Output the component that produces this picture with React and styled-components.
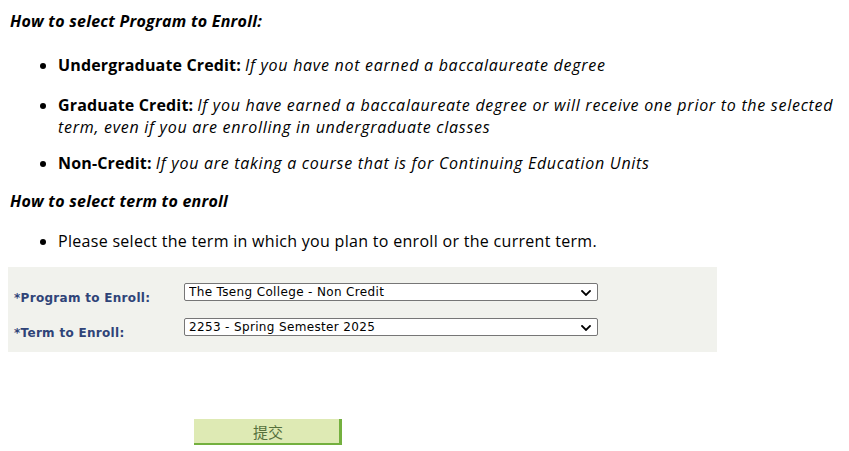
import React from "react";
import styled, { createGlobalStyle } from "styled-components";

const Global = createGlobalStyle`
  html, body { margin: 0; padding: 0; background: #ffffff; }
  body { font-family: "Open Sans", "Noto Sans", sans-serif; color: #000; }
`;

const Page = styled.div`
  padding: 0 8px 8px 8px;
  width: 833px;
`;

const Heading = styled.div`
  font-size: 16px;
  font-weight: 700;
  font-style: italic;
  line-height: 22px;
  letter-spacing: 0.25px;
  margin: ${(p) => p.$mt}px 0 0 2px;
`;

const List = styled.ul`
  margin: ${(p) => p.$mt}px 0 0 0;
  padding-left: 50px;
`;

const Item = styled.li`
  font-size: 16px;
  line-height: 22px;
  letter-spacing: 0.3px;
  margin-top: ${(p) => p.$mt || 0}px;
`;

const Term = styled.b`
  font-weight: 700;
  letter-spacing: 0.15px;
  margin-right: 4px;
`;

const Note = styled.i`
  font-style: italic;
  letter-spacing: 0.72px;
`;

const Panel = styled.div`
  margin-top: ${(p) => p.$mt}px;
  width: 709px;
  height: 85px;
  background: #f1f2ed;
  box-sizing: border-box;
  padding: 16px 0 0 6px;
  display: flex;
  flex-direction: column;
  gap: 17px;
`;

const Row = styled.div`
  display: flex;
  align-items: flex-end;
`;

const Label = styled.label`
  width: 170px;
  font-family: "DejaVu Sans", Verdana, sans-serif;
  font-size: 12px;
  letter-spacing: 0.3px;
  font-weight: 700;
  color: #2f4478;
  line-height: 13px;
  margin-bottom: -4px;
`;

const SelectWrap = styled.div`
  position: relative;
  width: 414px;
  height: 18px;
`;

const Select = styled.select`
  display: block;
  appearance: none;
  -webkit-appearance: none;
  width: 414px;
  height: 18px;
  box-sizing: border-box;
  font-family: "DejaVu Sans", Verdana, sans-serif;
  font-size: 12px;
  letter-spacing: 0.35px;
  color: #000;
  background: #fff;
  border: 1px solid #767676;
  border-radius: 2px;
  padding: 0 20px 0 4px;
  margin: 0;
  outline: none;
`;

const Chevron = styled.svg`
  position: absolute;
  right: 7px;
  top: 7px;
  width: 10px;
  height: 6px;
  pointer-events: none;
`;

const ButtonRow = styled.div`
  margin-top: 67px;
  padding-left: 186px;
`;

const Submit = styled.button`
  width: 148px;
  height: 26px;
  box-sizing: border-box;
  background: #deeab4;
  border: none;
  border-right: 3px solid #74b03f;
  border-bottom: 2px solid #74b03f;
  color: #55703c;
  font-family: "Noto Sans CJK SC", sans-serif;
  font-size: 15px;
  padding: 0 0 0 3px;
  cursor: pointer;
`;

function Dropdown({ value, label }) {
  return (
    <SelectWrap>
      <Select defaultValue={value}>
        <option value={value}>{label}</option>
      </Select>
      <Chevron viewBox="0 0 10 6">
        <path d="M1 1 L5 5 L9 1" fill="none" stroke="#000" strokeWidth="1.8" strokeLinecap="square" />
      </Chevron>
    </SelectWrap>
  );
}

export default function App() {
  return (
    <Page>
      <Global />
      <Heading $mt={10}>How to select Program to Enroll:</Heading>
      <List $mt={22}>
        <Item>
          <Term>Undergraduate Credit:</Term>
          <Note>If you have not earned a baccalaureate degree</Note>
        </Item>
        <Item $mt={18}>
          <Term>Graduate Credit:</Term>
          <Note>
            If you have earned a baccalaureate degree or will receive one prior to the selected term, even if you are enrolling in undergraduate classes
          </Note>
        </Item>
        <Item $mt={14}>
          <Term>Non-Credit:</Term>
          <Note>If you are taking a course that is for Continuing Education Units</Note>
        </Item>
      </List>
      <Heading $mt={16}>How to select term to enroll</Heading>
      <List $mt={18}>
        <Item>Please select the term in which you plan to enroll or the current term.</Item>
      </List>
      <Panel $mt={15}>
        <Row>
          <Label>*Program to Enroll:</Label>
          <Dropdown value="tseng" label="The Tseng College - Non Credit" />
        </Row>
        <Row>
          <Label>*Term to Enroll:</Label>
          <Dropdown value="2253" label="2253 - Spring Semester 2025" />
        </Row>
      </Panel>
      <ButtonRow>
        <Submit type="button">提交</Submit>
      </ButtonRow>
    </Page>
  );
}
